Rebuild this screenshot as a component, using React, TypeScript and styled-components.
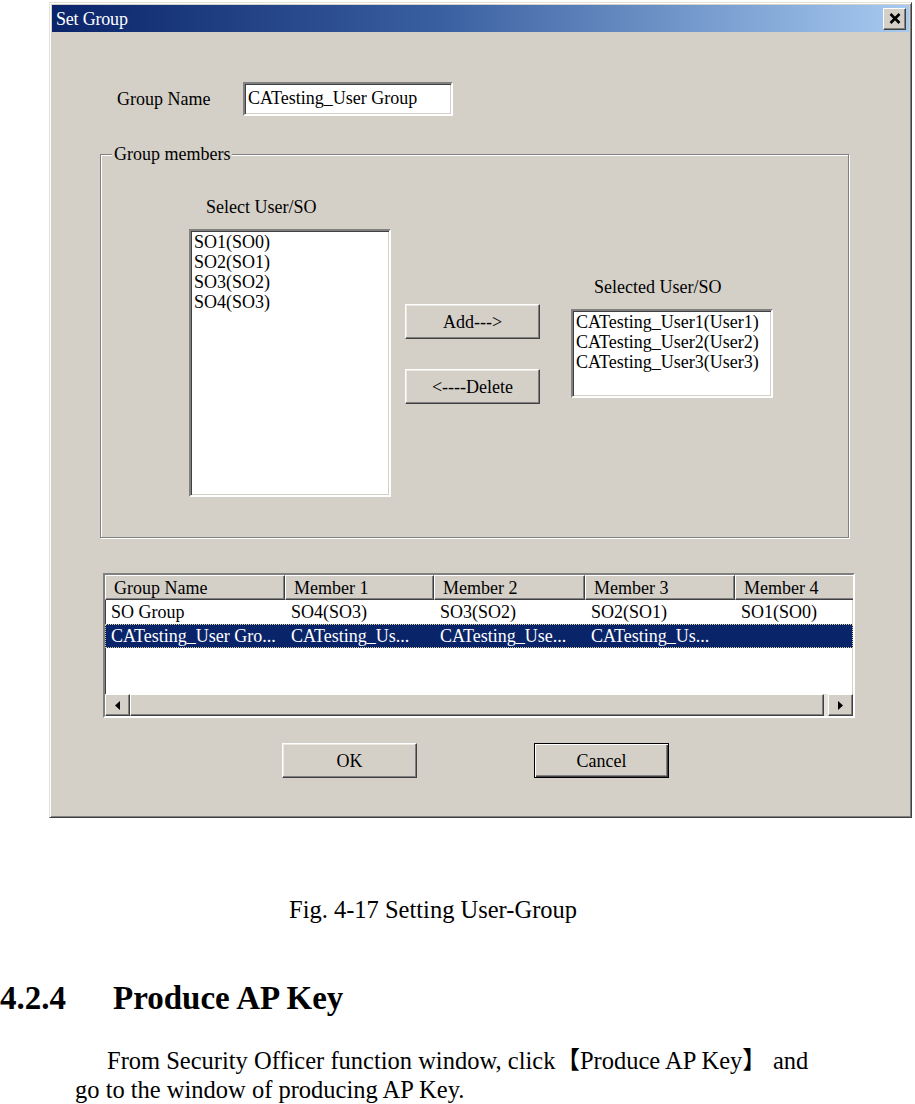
import React from "react";
import styled, { createGlobalStyle, css } from "styled-components";

const Global = createGlobalStyle`
  html, body { margin: 0; padding: 0; background: #fff; }
  body { font-family: "Liberation Serif", "Times New Roman", "Noto Sans CJK SC", serif; color: #000; }
  * { box-sizing: border-box; }
`;

const sunken = css`
  border: 2px solid;
  border-color: #808080 #fff #fff #808080;
  box-shadow: inset 1px 1px 0 #404040, inset -1px -1px 0 #d4d0c8;
`;

const raised = css`
  border: 1px solid;
  border-color: #fff #404040 #404040 #fff;
  box-shadow: inset -1px -1px 0 #808080;
  background: #d4d0c8;
`;

const Page = styled.div`
  width: 915px;
  min-height: 1104px;
  padding-top: 2px;
  overflow: hidden;
`;

const Window = styled.div`
  margin-left: 49px;
  width: 863px;
  height: 816px;
  background: #d4d0c8;
  border: 1px solid;
  border-color: #e4e1da #404040 #404040 #e4e1da;
  box-shadow: inset 1px 1px 0 #fff, inset -1px -1px 0 #808080;
  padding: 2px;
  display: flex;
  flex-direction: column;
  font-size: 18px;
  line-height: 20px;
`;

const TitleBar = styled.div`
  height: 27px;
  background: linear-gradient(to right, #0a246a 0%, #3a5fa0 45%, #a6caf0 100%);
  display: flex;
  align-items: center;
  justify-content: space-between;
  padding: 0 3px 0 4px;
`;

const Title = styled.span`
  color: #fff;
  font-size: 18px;
  letter-spacing: -0.2px;
`;

const CloseBtn = styled.div`
  ${raised};
  width: 23px;
  height: 22px;
  display: flex;
  align-items: center;
  justify-content: center;
`;

const Body = styled.div`
  display: flex;
  flex-direction: column;
  flex: 1;
`;

const NameRow = styled.div`
  margin-top: 50px;
  padding-left: 65px;
  display: flex;
  align-items: center;
`;

const Label = styled.span<{ $width?: number; $indent?: number }>`
  display: block;
  width: ${(p) => (p.$width ? `${p.$width}px` : "auto")};
  padding-left: ${(p) => p.$indent ?? 0}px;
  white-space: nowrap;
`;

const TextField = styled.div`
  ${sunken};
  width: 210px;
  height: 34px;
  background: #fff;
  padding: 4px 3px;
  white-space: nowrap;
`;

const GroupBox = styled.div`
  position: relative;
  margin-top: 38px;
  margin-left: 48px;
  width: 749px;
  height: 384px;
  border: 1px solid #808080;
  box-shadow: inset 1px 1px 0 #fff, 1px 1px 0 #fff;
  display: flex;
  padding-left: 88px;
`;

const Legend = styled.span`
  position: absolute;
  top: -11px;
  left: 11px;
  padding: 0 2px;
  background: #d4d0c8;
`;

const Column = styled.div<{ $top: number; $gap?: number; $left?: number }>`
  display: flex;
  flex-direction: column;
  padding-top: ${(p) => p.$top}px;
  margin-left: ${(p) => p.$left ?? 0}px;
  gap: ${(p) => p.$gap ?? 12}px;
`;

const ListBox = styled.div<{ $height: number }>`
  ${sunken};
  width: 202px;
  height: ${(p) => p.$height}px;
  background: #fff;
  padding: 1px 3px;
  white-space: nowrap;
`;

const Button = styled.div<{ $default?: boolean }>`
  width: 135px;
  height: 35px;
  display: flex;
  align-items: center;
  justify-content: center;
  background: #d4d0c8;
  ${(p) =>
    p.$default
      ? css`
          border: 1px solid #000;
          box-shadow: inset 1px 1px 0 #fff, inset -1px -1px 0 #404040, inset -2px -2px 0 #808080;
        `
      : css`
          border: 1px solid;
          border-color: #fff #404040 #404040 #fff;
          box-shadow: inset -1px -1px 0 #808080, inset 1px 1px 0 #ece9e2;
        `}
`;

const Table = styled.div`
  ${sunken};
  margin-top: 35px;
  margin-left: 51px;
  width: 752px;
  height: 145px;
  background: #fff;
  overflow: hidden;
  display: flex;
  flex-direction: column;
`;

const HeaderRow = styled.div`
  display: flex;
  height: 25px;
  flex-shrink: 0;
`;

const HeaderCell = styled.div<{ $w: number }>`
  ${raised};
  width: ${(p) => p.$w}px;
  flex-shrink: 0;
  padding: 2px 0 0 8px;
  white-space: nowrap;
  overflow: hidden;
`;

const Row = styled.div<{ $selected?: boolean }>`
  display: flex;
  height: 24px;
  flex-shrink: 0;
  align-items: center;
  ${(p) =>
    p.$selected &&
    css`
      background: #0a246a;
      color: #fff;
      outline: 1px dotted #d8cf9a;
      outline-offset: -1px;
    `}
`;

const Cell = styled.div<{ $w: number }>`
  width: ${(p) => p.$w}px;
  flex-shrink: 0;
  padding-left: 6px;
  white-space: nowrap;
  overflow: hidden;
`;

const Filler = styled.div`
  flex: 1;
`;

const ScrollBar = styled.div`
  height: 22px;
  flex-shrink: 0;
  display: flex;
  background: #e6e3dd;
`;

const ArrowBtn = styled.div`
  ${raised};
  width: 25px;
  height: 22px;
  flex-shrink: 0;
  display: flex;
  align-items: center;
  justify-content: center;
`;

const Thumb = styled.div`
  ${raised};
  flex: 1;
  margin-right: 4px;
`;

const ButtonRow = styled.div`
  margin-top: 25px;
  padding-left: 230px;
  display: flex;
  gap: 117px;
`;

const Caption = styled.p`
  margin: 78px 0 0;
  padding-left: 289px;
  font-size: 24.5px;
  line-height: 28px;
`;

const Heading = styled.h2`
  margin: 54px 0 0;
  display: flex;
  font-size: 33px;
  line-height: 40px;
  font-weight: bold;
`;

const SectionNo = styled.span`
  width: 113px;
`;

const Para = styled.p`
  margin: 28px 0 0;
  padding-left: 75px;
  width: 830px;
  text-indent: 32px;
  font-size: 24.5px;
  line-height: 29px;
`;

const cols = [180, 149, 151, 150, 150];

const headers = ["Group Name", "Member 1", "Member 2", "Member 3", "Member 4"];
const rows = [
  { cells: ["SO Group", "SO4(SO3)", "SO3(SO2)", "SO2(SO1)", "SO1(SO0)"], selected: false },
  {
    cells: ["CATesting_User Gro...", "CATesting_Us...", "CATesting_Use...", "CATesting_Us...", ""],
    selected: true,
  },
];

const Tri = ({ dir }: { dir: "left" | "right" }) => (
  <svg width="5" height="9" viewBox="0 0 5 9">
    <path d={dir === "left" ? "M5 0 L0 4.5 L5 9 Z" : "M0 0 L5 4.5 L0 9 Z"} fill="#000" />
  </svg>
);

export default function App() {
  return (
    <Page>
      <Global />
      <Window>
        <TitleBar>
          <Title>Set Group</Title>
          <CloseBtn>
            <svg width="12" height="11" viewBox="0 0 12 11">
              <path d="M1.5 1 L10.5 10 M10.5 1 L1.5 10" stroke="#000" strokeWidth="2.6" />
            </svg>
          </CloseBtn>
        </TitleBar>
        <Body>
          <NameRow>
            <Label $width={126}>Group Name</Label>
            <TextField>CATesting_User Group</TextField>
          </NameRow>

          <GroupBox>
            <Legend>Group members</Legend>
            <Column $top={42}>
              <Label $indent={17}>Select User/SO</Label>
              <ListBox $height={268}>
                <div>SO1(SO0)</div>
                <div>SO2(SO1)</div>
                <div>SO3(SO2)</div>
                <div>SO4(SO3)</div>
              </ListBox>
            </Column>
            <Column $top={149} $gap={30} $left={14}>
              <Button>Add---&gt;</Button>
              <Button>&lt;----Delete</Button>
            </Column>
            <Column $top={122} $left={31}>
              <Label $indent={23}>Selected User/SO</Label>
              <ListBox $height={89}>
                <div>CATesting_User1(User1)</div>
                <div>CATesting_User2(User2)</div>
                <div>CATesting_User3(User3)</div>
              </ListBox>
            </Column>
          </GroupBox>

          <Table>
            <HeaderRow>
              {headers.map((h, i) => (
                <HeaderCell key={h} $w={cols[i]}>
                  {h}
                </HeaderCell>
              ))}
            </HeaderRow>
            {rows.map((r, ri) => (
              <Row key={ri} $selected={r.selected}>
                {r.cells.map((c, i) => (
                  <Cell key={i} $w={cols[i]}>
                    {c}
                  </Cell>
                ))}
              </Row>
            ))}
            <Filler />
            <ScrollBar>
              <ArrowBtn>
                <Tri dir="left" />
              </ArrowBtn>
              <Thumb />
              <ArrowBtn>
                <Tri dir="right" />
              </ArrowBtn>
            </ScrollBar>
          </Table>

          <ButtonRow>
            <Button>OK</Button>
            <Button $default>Cancel</Button>
          </ButtonRow>
        </Body>
      </Window>

      <Caption>Fig. 4-17 Setting User-Group</Caption>
      <Heading>
        <SectionNo>4.2.4</SectionNo>
        <span>Produce AP Key</span>
      </Heading>
      <Para>
        From Security Officer function window, click【Produce AP Key】 and go to the window of producing AP Key.
      </Para>
    </Page>
  );
}
